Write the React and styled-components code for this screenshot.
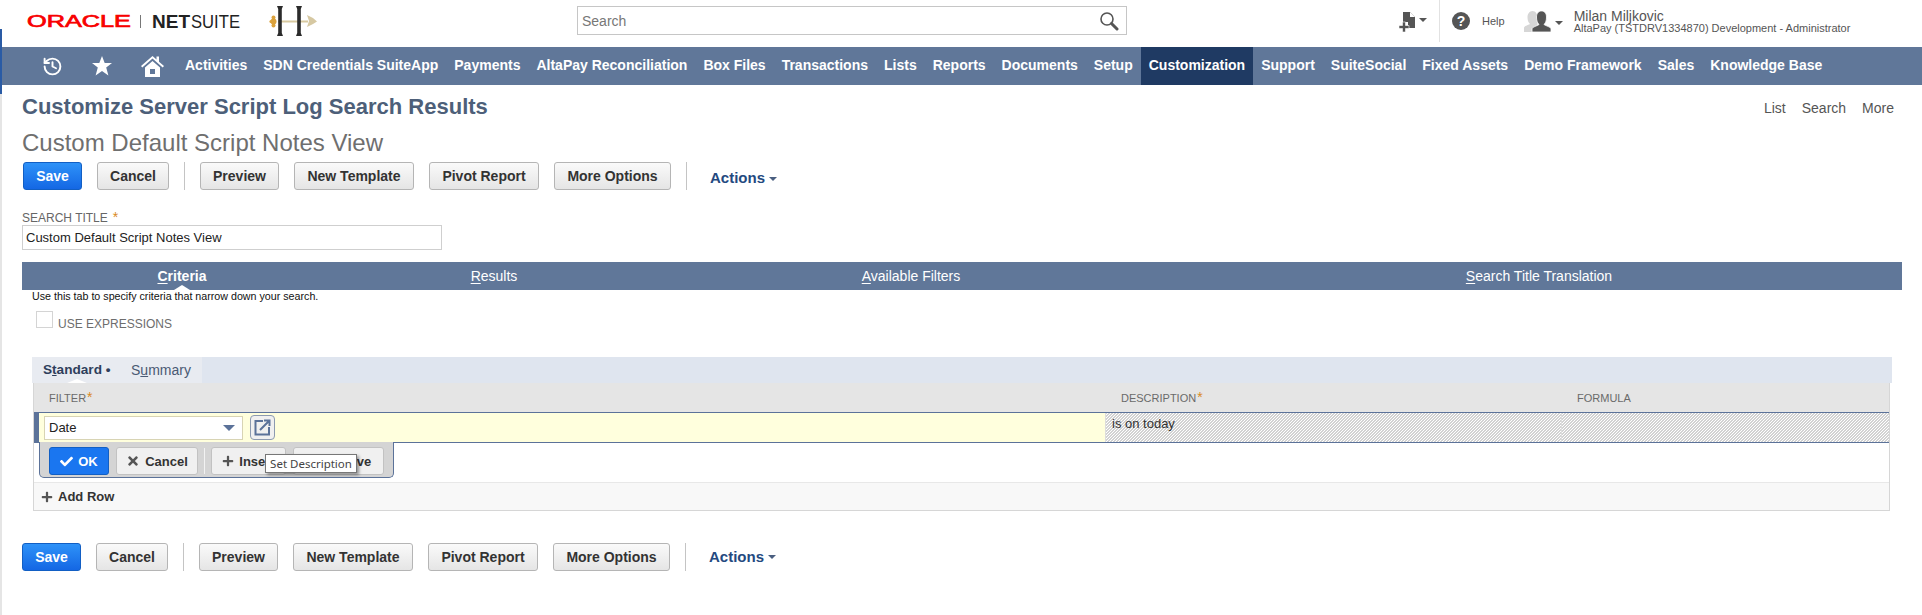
import React from "react";
import styled, { createGlobalStyle } from "styled-components";
import { History } from "lucide-react";
import { FaTrash, FaCheck, FaTimes, FaPlus } from "react-icons/fa";

const GlobalStyle = createGlobalStyle`
    html, body {
        margin: 0;
        padding: 0;
        background: #fff;
        font-family: "Liberation Sans", Arial, sans-serif;
    }
`

const Page = styled.div`
    position: relative;
    width: 1922px;
    height: 615px;
    overflow: hidden;
    background: #fff;

    &::before {
        content: "";
        position: absolute;
        left: 0;
        top: 94px;
        bottom: 0;
        width: 2px;
        background: #e5e5e5;
    }

    &::after {
        content: "";
        position: absolute;
        left: 0;
        top: 29px;
        height: 65px;
        width: 2px;
        background: #2a5ba5;
    }
`

const Header = styled.header`
    display: grid;
    grid-template-columns: 577px 550px 1fr;
    align-items: start;
    height: 47px;
`

const SearchBox = styled.div`
    display: flex;
    align-items: center;
    justify-content: space-between;
    box-sizing: border-box;
    height: 29px;
    margin-top: 6px;
    padding: 0 7px 0 4px;
    border: 1px solid #c6c6c6;
    color: #777;
    font-size: 14px;
`

const HeaderRight = styled.div`
    display: flex;
    align-items: flex-start;
    padding-left: 272px;
`

const CreateMenu = styled.div`
    display: flex;
    box-sizing: border-box;
    width: 41px;
    height: 42px;
    padding-top: 12px;
    border-right: 1px solid #e2e2e2;
`

const Caret = styled.span`
    display: inline-block;
    flex: none;
    width: 0;
    height: 0;
    margin: ${p => p.$margin || "0"};
    border-left: ${p => p.$size || 4}px solid transparent;
    border-right: ${p => p.$size || 4}px solid transparent;
    border-top: ${p => p.$size || 4}px solid ${p => p.$color || "#555"};
`

const HelpLink = styled.div`
    display: flex;
    align-items: center;
    height: 42px;
    margin-left: 12px;
    color: #555;
    font-size: 11px;
`

const HelpIcon = styled.span`
    display: flex;
    align-items: center;
    justify-content: center;
    width: 18px;
    height: 18px;
    margin-right: 12px;
    border-radius: 50%;
    background: #555;
    color: #fff;
    font-size: 14px;
    font-weight: bold;
`

const UserMenu = styled.div`
    display: flex;
    align-items: center;
    height: 42px;
    margin-left: 19px;
`

const UserText = styled.div`
    margin-left: 11px;
    margin-top: 2px;
    color: #555;
`

const UserName = styled.div`
    font-size: 14px;
    line-height: 12px;
`

const UserRole = styled.div`
    font-size: 11px;
    line-height: 12px;
`

const Nav = styled.nav`
    display: flex;
    align-items: stretch;
    height: 38px;
    padding-left: 27px;
    background: #607799;
`

const NavIcon = styled.span`
    display: flex;
    align-items: center;
    justify-content: center;
    width: 50px;
    color: #fff;
`

const NavItem = styled.a`
    display: flex;
    align-items: center;
    padding: 0 8px 2px;
    color: #fff;
    font-size: 14px;
    font-weight: bold;
    white-space: nowrap;
    background: ${p => (p.$active ? "#1f3a63" : "transparent")};
`

const Content = styled.main`
    padding: 0 20px 0 22px;
`

const TitleRow = styled.div`
    display: flex;
    align-items: center;
    justify-content: space-between;
    height: 24px;
    margin-top: 10px;
`

const Title = styled.h1`
    margin: 0;
    color: #4d5f79;
    font-size: 22px;
    font-weight: bold;
`

const TopLinks = styled.div`
    display: flex;
    gap: 16px;
    margin: 2px 8px 0 0;
    color: #555;
    font-size: 14px;
`

const SubTitle = styled.h2`
    margin: 10px 0 0;
    color: #6f6f6f;
    font-size: 24px;
    font-weight: normal;
    line-height: 28px;
`

const Toolbar = styled.div`
    display: flex;
    align-items: center;
    gap: 15px;
    height: 28px;
    margin-top: ${p => p.$top}px;
    margin-left: ${p => p.$left || 0}px;
`

const Button = styled.button`
    box-sizing: border-box;
    width: ${p => p.$w}px;
    height: 28px;
    padding: 0;
    border: 1px solid #b5b5b5;
    border-radius: 3px;
    background: linear-gradient(#fafafa, #e5e5e5);
    color: #333;
    font-family: inherit;
    font-size: 14px;
    font-weight: bold;
`

const SaveButton = styled(Button)`
    border-color: #125fc4;
    background: linear-gradient(#2e92f8, #1467e4);
    color: #fff;
`

const Separator = styled.span`
    width: 1px;
    height: 28px;
    background: #c4c4c4;
`

const ActionsLink = styled.a`
    display: flex;
    align-items: center;
    margin-left: 8px;
    margin-top: ${p => p.$shift}px;
    color: #24497f;
    font-size: 15px;
    font-weight: bold;
`

const FieldLabel = styled.label`
    display: block;
    margin-top: 21px;
    color: #666;
    font-size: 12px;
    line-height: 14px;
`

const Required = styled.span`
    margin-left: ${p => p.$gap || 5}px;
    color: #d98a1f;
    font-size: 14px;
    line-height: 10px;
`

const TextField = styled.div`
    box-sizing: border-box;
    width: 420px;
    height: 25px;
    padding: 0 3px;
    border: 1px solid #cfcfcf;
    color: #222;
    font-size: 13px;
    line-height: 23px;
`

const Tabs = styled.div`
    display: grid;
    grid-template-columns: 320px 304px 530px 1fr;
    height: 28px;
    margin-top: 12px;
    background: #607799;
`

const Tab = styled.a`
    position: relative;
    color: #fff;
    font-size: 14px;
    font-weight: ${p => (p.$active ? "bold" : "normal")};
    line-height: 28px;
    text-align: center;

    u {
        text-underline-offset: 2px;
    }

    ${p => p.$active && `
        &::after {
            content: "";
            position: absolute;
            left: 50%;
            bottom: 0;
            margin-left: -8px;
            border-left: 8px solid transparent;
            border-right: 8px solid transparent;
            border-bottom: 5px solid #fff;
        }
    `}
`

const HelpText = styled.div`
    margin-left: 10px;
    color: #111;
    font-size: 10.7px;
    line-height: 12px;
`

const CheckRow = styled.div`
    display: flex;
    align-items: flex-end;
    margin: 9px 0 0 14px;
`

const CheckBox = styled.span`
    box-sizing: border-box;
    width: 17px;
    height: 17px;
    border: 1px solid #d4d4d4;
`

const CheckLabel = styled.span`
    margin-left: 5px;
    margin-bottom: -3px;
    color: #6d6d6d;
    font-size: 12px;
    line-height: 14px;
`

const SubTabs = styled.div`
    display: flex;
    height: 26px;
    margin: 29px 10px 0 10px;
    background: #dfe5ef;
`

const SubTabGroup = styled.div`
    display: flex;
    box-sizing: border-box;
    width: 170px;
    padding-left: 11px;
    background: #e8ebf1;
`

const SubTab = styled.a`
    position: relative;
    width: ${p => p.$w}px;
    color: ${p => (p.$active ? "#2e3f5c" : "#4a5a74")};
    font-size: ${p => (p.$active ? "13.6px" : "14px")};
    font-weight: ${p => (p.$active ? "bold" : "normal")};
    line-height: 26px;

    ${p => p.$active && `
        &::after {
            content: "";
            position: absolute;
            left: 24px;
            bottom: 0;
            border-left: 10px solid transparent;
            border-right: 10px solid transparent;
            border-bottom: 4px solid #fff;
        }
    `}
`

const Machine = styled.div`
    box-sizing: border-box;
    margin: 0 12px 0 11px;
    border: 1px solid #d6d6d6;
    border-top: none;
`

const Columns = styled.div`
    display: grid;
    grid-template-columns: 1071px 456px 1fr;
`

const HeadRow = styled(Columns)`
    height: 29px;
    background: #e5e5e5;
`

const HeadCell = styled.div`
    padding-left: ${p => p.$left}px;
    color: #6a6a6a;
    font-size: 11px;
    line-height: 31px;
`

const EditWrap = styled.div`
    position: relative;
    height: 70px;
`

const EditRow = styled(Columns)`
    box-sizing: border-box;
    height: 31px;
    border-top: 1px solid #5b7299;
    border-bottom: 1px solid #5b7299;
`

const FilterCell = styled.div`
    display: flex;
    align-items: center;
    box-sizing: border-box;
    padding-left: 5px;
    border-left: 5px solid #5b7299;
    background: #ffffdd;
`

const SelectBox = styled.div`
    display: flex;
    align-items: center;
    justify-content: space-between;
    box-sizing: border-box;
    width: 199px;
    height: 24px;
    padding: 0 7px 0 4px;
    border: 1px solid #d8d4b4;
    background: #fff;
    color: #222;
    font-size: 13px;
`

const OpenButton = styled.span`
    display: flex;
    align-items: center;
    justify-content: center;
    box-sizing: border-box;
    width: 25px;
    height: 25px;
    margin-left: 7px;
    border: 1px solid #8c9ab0;
    border-radius: 4px;
    background: #f0f0f0;
`

const HatchCell = styled.div`
    padding-left: 6px;
    border-left: 1px solid #ddd;
    color: #333;
    font-size: 13px;
    line-height: 21px;
    background: linear-gradient(135deg, #d2d2d2 25%, #fff 25%, #fff 50%, #d2d2d2 50%, #d2d2d2 75%, #fff 75%);
    background-size: 3px 3px;
`

const ActionBar = styled.div`
    position: absolute;
    top: 30px;
    left: 5px;
    display: flex;
    align-items: center;
    gap: 7px;
    box-sizing: border-box;
    width: 355px;
    height: 36px;
    padding: 3px 0 0 9px;
    border: 1px solid #5b7299;
    border-top: none;
    border-radius: 0 0 5px 5px;
    background: #d4d4d4;
`

const RowButton = styled.button`
    display: flex;
    align-items: center;
    justify-content: center;
    gap: 5px;
    box-sizing: border-box;
    width: ${p => p.$w}px;
    height: 28px;
    padding: 0;
    border: 1px solid ${p => (p.$primary ? "#125fc4" : "#c2c2c2")};
    border-radius: 3px;
    background: ${p => (p.$primary ? "#1a76f0" : "#f0f0f0")};
    color: ${p => (p.$primary ? "#fff" : "#333")};
    font-family: inherit;
    font-size: 13px;
    font-weight: bold;

    svg {
        color: ${p => (p.$primary ? "#fff" : "#555")};
    }
`

const BarDivider = styled.span`
    width: 1px;
    height: 26px;
    margin: 0 -1px;
    background: #f2f2f2;
`

const Tooltip = styled.div`
    position: absolute;
    left: 225px;
    top: 12px;
    box-sizing: border-box;
    width: 92px;
    height: 19px;
    border: 1px solid #777;
    background: #fff;
    box-shadow: 2px 2px 3px rgba(0, 0, 0, 0.4);
    color: #444;
    font-family: "Noto Sans", sans-serif;
    font-size: 11.5px;
    line-height: 17px;
    text-align: center;
    white-space: nowrap;
`

const AddRow = styled.div`
    display: flex;
    align-items: center;
    gap: 5px;
    box-sizing: border-box;
    height: 28px;
    padding-left: 7px;
    border-top: 1px solid #e8e8e8;
    background: #f8f8f8;
    color: #333;
    font-size: 13px;
    font-weight: bold;

    svg {
        color: #555;
    }
`

const navItems = [
    "Activities", "SDN Credentials SuiteApp", "Payments", "AltaPay Reconciliation",
    "Box Files", "Transactions", "Lists", "Reports", "Documents", "Setup",
    "Customization", "Support", "SuiteSocial", "Fixed Assets", "Demo Framework",
    "Sales", "Knowledge Base",
];

const Logo = () => (
    <svg width="330" height="47" viewBox="0 0 330 47">
        <text x="27" y="27" fontFamily="Liberation Sans" fontSize="17" fill="#f80000" stroke="#f80000" strokeWidth="0.7" textLength="104" lengthAdjust="spacingAndGlyphs">ORACLE</text>
        <rect x="140" y="15" width="1" height="13" fill="#777" />
        <text x="152" y="28" fontFamily="Liberation Sans" fontSize="18" fontWeight="bold" fill="#222" textLength="38" lengthAdjust="spacingAndGlyphs">NET</text>
        <text x="191" y="28" fontFamily="Liberation Sans" fontSize="18" fill="#222" textLength="49" lengthAdjust="spacingAndGlyphs">SUITE</text>
        <rect x="278" y="20.500" width="30" height="2" fill="#d8c9a0" />
        <path d="M277 6h6l-1.200 3v24l1.200 3h-6l1.200-3V9z" fill="#2b2b2b" />
        <path d="M296 6h6l-1.200 3v24l1.200 3h-6l1.200-3V9z" fill="#2b2b2b" />
        <circle cx="273.500" cy="21.500" r="3" fill="#dba23c" />
        <circle cx="271" cy="21.500" r="1.600" fill="#dba23c" />
        <circle cx="273.500" cy="17.500" r="2" fill="#dba23c" />
        <circle cx="273.500" cy="25.500" r="2" fill="#dba23c" />
        <path d="M307 15l6 3 4 3.500-4 2.500-6 3 2-6z" fill="#d6c8a2" />
    </svg>
);

const SearchIcon = () => (
    <svg width="20" height="20" viewBox="0 0 20 20">
        <circle cx="8" cy="8" r="6" fill="none" stroke="#555" strokeWidth="1.6" />
        <path d="M12.500 12.500L18 18" stroke="#555" strokeWidth="3" strokeLinecap="round" />
    </svg>
);

const CreateIcon = () => (
    <svg width="16" height="20" viewBox="0 0 16 20">
        <path d="M4 0h7l5 5v11H9v-6H4z" fill="#555" />
        <path d="M11 0v5h5" fill="#fff" />
        <path d="M3.500 10h3v3.500H10v3H6.500V20h-3v-3.500H0v-3h3.500z" fill="#555" stroke="#fff" strokeWidth="0.6" />
    </svg>
);

const UserIcon = () => (
    <svg width="29" height="21" viewBox="0 0 29 21">
        <path d="M0 21v-4c0-2 4-3 6-4-2-2-2.500-4-2.500-7 0-3 2-6 5-6s5 3 5 6v15z" fill="#d6d6d6" />
        <path d="M8 21v-3c0-2 5-3 7-4.500-2-2-2.500-4.500-2.500-7.500 0-3.500 2-6 5-6s5 2.500 5 6c0 3-.5 5.500-2.500 7.500 2 1.500 7 2.500 7 4.500v3z" fill="#555" stroke="#fff" strokeWidth="0.8" />
    </svg>
);

const StarIcon = () => (
    <svg width="20" height="20" viewBox="0 0 20 20">
        <path d="M10 0l2.700 7H20l-5.800 4.500 2.200 8L10 15l-6.400 4.500 2.200-8L0 7h7.300z" fill="#fff" />
    </svg>
);

const HomeIcon = () => (
    <svg width="23" height="23" viewBox="0 0 23 23">
        <path d="M0 11L11.500 1l4 3.500V1.500H18v5.200l5 4.300-1.300 1.500L11.500 3.500 1.300 12.500z" fill="#fff" />
        <path fillRule="evenodd" d="M4 12.500l7.500-6.500 7.500 6.500V22H4zM9 14v5h5v-5z" fill="#fff" />
    </svg>
);

const OpenIcon = () => (
    <svg width="17" height="17" viewBox="0 0 17 17" fill="none" stroke="#5b7299" strokeWidth="2">
        <path d="M9 2H1.500v13.500H15V8" />
        <path d="M6 11L15 2M10 1.500h5.500V7" />
    </svg>
);

const ButtonBar = ({ top, left, actionsShift }) => (
    <Toolbar $top={top} $left={left}>
        <SaveButton $w={59}>Save</SaveButton>
        <Button $w={72}>Cancel</Button>
        <Separator />
        <Button $w={79}>Preview</Button>
        <Button $w={120}>New Template</Button>
        <Button $w={110}>Pivot Report</Button>
        <Button $w={117}>More Options</Button>
        <Separator />
        <ActionsLink $shift={actionsShift}>Actions<Caret $size={4} $color="#4a5f80" $margin="2px 0 0 4px" /></ActionsLink>
    </Toolbar>
);

const App = () => {
    return (
        <Page>
            <GlobalStyle />
            <Header>
                <Logo />
                <SearchBox>Search<SearchIcon /></SearchBox>
                <HeaderRight>
                    <CreateMenu>
                        <CreateIcon />
                        <Caret $margin="6px 0 0 4px" />
                    </CreateMenu>
                    <HelpLink>
                        <HelpIcon>?</HelpIcon>
                        Help
                    </HelpLink>
                    <UserMenu>
                        <UserIcon />
                        <Caret $margin="3px 0 0 2px" />
                        <UserText>
                            <UserName>Milan Miljkovic</UserName>
                            <UserRole>AltaPay (TSTDRV1334870) Development - Administrator</UserRole>
                        </UserText>
                    </UserMenu>
                </HeaderRight>
            </Header>
            <Nav>
                <NavIcon><History size={21} strokeWidth={2.2} /></NavIcon>
                <NavIcon><StarIcon /></NavIcon>
                <NavIcon><HomeIcon /></NavIcon>
                {navItems.map(item => (
                    <NavItem key={item} $active={item === "Customization"}>{item}</NavItem>
                ))}
            </Nav>
            <Content>
                <TitleRow>
                    <Title>Customize Server Script Log Search Results</Title>
                    <TopLinks>
                        <span>List</span>
                        <span>Search</span>
                        <span>More</span>
                    </TopLinks>
                </TitleRow>
                <SubTitle>Custom Default Script Notes View</SubTitle>
                <ButtonBar top={5} left={1} actionsShift={3} />
                <FieldLabel>SEARCH TITLE<Required>*</Required></FieldLabel>
                <TextField>Custom Default Script Notes View</TextField>
                <Tabs>
                    <Tab $active><u>C</u>riteria</Tab>
                    <Tab><u>R</u>esults</Tab>
                    <Tab><u>A</u>vailable Filters</Tab>
                    <Tab><u>S</u>earch Title Translation</Tab>
                </Tabs>
                <HelpText>Use this tab to specify criteria that narrow down your search.</HelpText>
                <CheckRow>
                    <CheckBox />
                    <CheckLabel>USE EXPRESSIONS</CheckLabel>
                </CheckRow>
                <SubTabs>
                    <SubTabGroup>
                        <SubTab $active $w={88}>S<u>t</u>andard •</SubTab>
                        <SubTab $w={70}>S<u>u</u>mmary</SubTab>
                    </SubTabGroup>
                </SubTabs>
                <Machine>
                    <HeadRow>
                        <HeadCell $left={15}>FILTER<Required $gap={1}>*</Required></HeadCell>
                        <HeadCell $left={16}>DESCRIPTION<Required $gap={1}>*</Required></HeadCell>
                        <HeadCell $left={16}>FORMULA</HeadCell>
                    </HeadRow>
                    <EditWrap>
                        <EditRow>
                            <FilterCell>
                                <SelectBox>Date<Caret $size={6} $color="#5b7299" /></SelectBox>
                                <OpenButton><OpenIcon /></OpenButton>
                            </FilterCell>
                            <HatchCell>is on today</HatchCell>
                            <HatchCell />
                        </EditRow>
                        <ActionBar>
                            <RowButton $primary $w={60}><FaCheck size={13} />OK</RowButton>
                            <RowButton $w={82}><FaTimes size={14} />Cancel</RowButton>
                            <BarDivider />
                            <RowButton $w={75}><FaPlus size={12} />Insert</RowButton>
                            <RowButton $w={91}><FaTrash size={10} />Remove</RowButton>
                            <Tooltip>Set Description</Tooltip>
                        </ActionBar>
                    </EditWrap>
                    <AddRow><FaPlus size={12} />Add Row</AddRow>
                </Machine>
                <ButtonBar top={32} actionsShift={-2} />
            </Content>
        </Page>
    );
}

export default App;
